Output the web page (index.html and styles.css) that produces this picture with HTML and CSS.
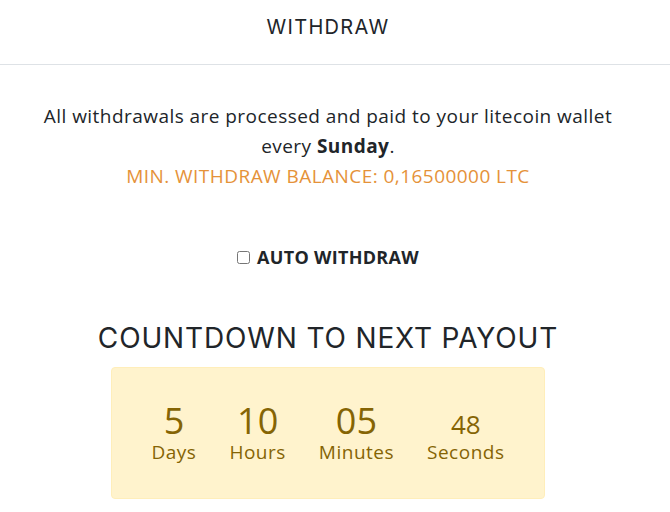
FILE: index.html
```html
<!DOCTYPE html>
<html lang="en">
<head>
    <meta charset="UTF-8">
    <meta name="viewport" content="width=device-width, initial-scale=1.0">
    <title>Withdraw</title>
    <link rel="stylesheet" href="styles.css">
</head>
<body>

    <div class="modal-header">
        <h5 class="modal-title">WITHDRAW</h5>
    </div>

    <div class="modal-body">
        <p class="info">All withdrawals are processed and paid to your litecoin wallet every <b>Sunday</b>.</p>
        <p class="min-balance">MIN. WITHDRAW BALANCE: 0,16500000 LTC</p>

        <label class="auto">
            <input type="checkbox" class="auto-check">
            <span>AUTO WITHDRAW</span>
        </label>

        <h3 class="countdown-title">COUNTDOWN TO NEXT PAYOUT</h3>
        <div class="countdown">
            <div class="unit"><span class="num">5</span><span class="lbl">Days</span></div>
            <div class="unit"><span class="num">10</span><span class="lbl">Hours</span></div>
            <div class="unit"><span class="num">05</span><span class="lbl">Minutes</span></div>
            <div class="unit"><span class="num small">48</span><span class="lbl">Seconds</span></div>
        </div>
    </div>

</body>
</html>
```

FILE: styles.css
```css
body {
    margin: 0;
    font-family: "Open Sans", "Noto Sans", sans-serif;
    color: #212529;
    background: #fff;
}

.modal-header {
    height: 64px;
    padding-right: 14px;
    border-bottom: 1px solid #dee2e6;
    display: flex;
    align-items: center;
    justify-content: center;
}

.modal-title {
    margin: 0 0 10px;
    font-family: "Inter", sans-serif;
    font-weight: 400;
    font-size: 20px;
    letter-spacing: 1.3px;
}

.modal-body {
    text-align: center;
    padding: 36px 14px 0 0;
}

.info {
    margin: 0 auto;
    max-width: 580px;
    font-size: 19px;
    letter-spacing: 0.45px;
    line-height: 30px;
}

.min-balance {
    margin: 0;
    font-size: 19px;
    letter-spacing: 0.45px;
    line-height: 30px;
    color: #e59239;
}

.auto {
    display: inline-flex;
    align-items: center;
    gap: 7px;
    margin-top: 54px;
    font-size: 18px;
    font-weight: 700;
    letter-spacing: 0.3px;
}

.auto-check {
    margin: 0;
    width: 13px;
    height: 13px;
}

.countdown-title {
    margin: 52px 0 12px;
    font-family: "Inter", sans-serif;
    font-weight: 400;
    font-size: 28px;
    letter-spacing: 0.85px;
}

.countdown {
    width: 434px;
    height: 132px;
    margin: 0 auto;
    box-sizing: border-box;
    background: #fff3cd;
    border: 1px solid #ffeeba;
    border-radius: 4px;
    color: #856404;
    display: flex;
    justify-content: center;
    align-items: center;
    gap: 33px;
}

.unit {
    display: flex;
    flex-direction: column;
    align-items: center;
}

.num {
    font-size: 36px;
    line-height: 38px;
}

.num.small {
    font-size: 26px;
    padding-top: 6px;
    line-height: 32px;
}

.lbl {
    font-size: 19px;
    letter-spacing: 0.5px;
    line-height: 24px;
}
```
